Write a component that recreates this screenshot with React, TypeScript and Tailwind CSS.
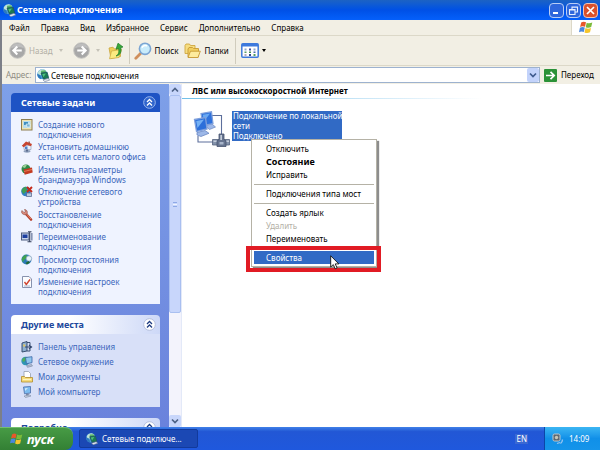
import type { ReactNode } from "react";

type IconProps = { className?: string };

const menuItems = ["Файл", "Правка", "Вид", "Избранное", "Сервис", "Дополнительно", "Справка"];

// Иконка сетевых подключений: глобус и монитор
function NetIcon({ className = "size-3" }: IconProps) {
  return (
    <svg viewBox="0 0 16 16" className={`shrink-0 ${className}`} aria-hidden="true">
      <circle cx="6.500" cy="6.500" r="6.200" fill="#4d9fd6" />
      <path d="M1 4Q3 .5 7 .4 9.500.6 11 2.300L7.500 4 5.500 7 2 8z" fill="#bfe3d8" />
      <path d="M.4 6l3 1 2 4-1 1.500Q.2 10.500.4 6z" fill="#2c79bd" />
      <path d="M5 2l5-.5 2.500 4L8 8 5 6z" fill="#58b267" />
      <path d="M5 5l7.500-1 2 7.500-6.500 1z" fill="#1c7a52" stroke="#1b4f63" strokeWidth=".9" />
      <path d="M6.500 6l4.500-.6-3 4.600z" fill="#4fc07d" />
      <path d="M7.500 13.500l6-2 2.200 2-6 2.300z" fill="#dfe5ee" stroke="#6b7a93" strokeWidth=".7" />
    </svg>
  );
}

function WizardIcon() {
  return (
    <svg viewBox="0 0 12 12" className="size-3 shrink-0" aria-hidden="true">
      <rect x=".5" y=".5" width="10.500" height="10.500" fill="#efe3b0" stroke="#8d7f52" />
      <rect x="2" y="2" width="7.500" height="7" fill="#b8dcec" />
      <path d="M3 3h4v3H3z" fill="#3f8fc0" />
      <path d="M5 5h4v3H6z" fill="#79b7d8" stroke="#fff" strokeWidth=".5" />
    </svg>
  );
}

function HomeNetIcon() {
  return (
    <svg viewBox="0 0 12 12" className="size-3 shrink-0" aria-hidden="true">
      <path d="M3 4.500h7v4H3z" fill="#eef2f8" stroke="#8b96b0" strokeWidth=".6" />
      <path d="M.8 4.800L5 .5l6 2.500-1 2.300-4-1.500-3.300 2.500z" fill="#c8452f" />
      <path d="M7.500.5h1.300v2H7.500z" fill="#8c4a3c" />
      <rect x="4" y="5.500" width="2.500" height="2.500" fill="#4e7fc9" />
      <ellipse cx="6" cy="10.300" rx="3.500" ry="1.400" fill="#8fa0bd" />
      <path d="M5 8.500h2v2H5z" fill="#5c6d90" />
    </svg>
  );
}

function FirewallIcon() {
  return (
    <svg viewBox="0 0 12 12" className="size-3 shrink-0" aria-hidden="true">
      <circle cx="5" cy="5" r="4.500" fill="#2f8a4a" />
      <path d="M1 3Q3 .5 6 .8L4 4z" fill="#9fd19a" />
      <path d="M2.500 5.500l8.500-2 .7 5-8 2.300z" fill="#c23a22" />
      <path d="M3 7.500l8-2" stroke="#ef9a70" strokeWidth=".7" fill="none" />
    </svg>
  );
}

function DisconnectIcon() {
  return (
    <svg viewBox="0 0 12 12" className="size-3 shrink-0" aria-hidden="true">
      <circle cx="5" cy="5.500" r="4.800" fill="#2f7fc4" />
      <path d="M.5 5Q1.500 1 5 .8l1 4.200L2.500 8z" fill="#3f9f55" />
      <path d="M5.500 7h5v3.500h-5z" fill="#b9c7dd" stroke="#4f618a" strokeWidth=".7" />
      <path d="M6 1l5 5M11 1L6 6" stroke="#c52a1a" strokeWidth="1.900" />
    </svg>
  );
}

function WrenchIcon() {
  return (
    <svg viewBox="0 0 12 12" className="size-3 shrink-0" aria-hidden="true">
      <path d="M5 5l5 5.500" stroke="#b5402c" strokeWidth="2.600" strokeLinecap="round" />
      <path d="M5.500 5l4.500 5" stroke="#e98b6e" strokeWidth=".9" />
      <path d="M1 1.500l2 2 1.500-1L3.500.5C6 .5 7 3 6 5 4 6.500 1 5.500.5 3z" fill="#d9887a" stroke="#8a5048" strokeWidth=".6" />
    </svg>
  );
}

function RenameIcon() {
  return (
    <svg viewBox="0 0 12 12" className="size-3 shrink-0" aria-hidden="true">
      <rect x=".5" y="2" width="7.500" height="7" fill="#c7d3ea" stroke="#4d5d80" />
      <rect x="1.500" y="3.500" width="5" height="3.500" fill="#1d3fa0" />
      <path d="M7 .8h3.500M8.700.8v10M6.500 10.800h4" stroke="#35415e" strokeWidth="1.100" fill="none" />
      <path d="M10.700 2v7.500" stroke="#8593b3" strokeWidth="1.800" />
    </svg>
  );
}

function StatusIcon() {
  return (
    <svg viewBox="0 0 12 12" className="size-3 shrink-0" aria-hidden="true">
      <circle cx="5.500" cy="5.500" r="5" fill="#2c7ab8" />
      <path d="M1 4Q2.500 1 5.500.8L6 4 3 6 2 8.500Q0 6 1 4z" fill="#3fa250" />
      <circle cx="8" cy="4.500" r="2.700" fill="#e7f4fb" stroke="#8fa7c2" strokeWidth=".8" />
      <path d="M4.500 9l3-2 1.500 1.500-3 2z" fill="#236a33" />
    </svg>
  );
}

function SettingsIcon() {
  return (
    <svg viewBox="0 0 12 12" className="size-3 shrink-0" aria-hidden="true">
      <path d="M1.500.5h6.500l2.500 2.500v8.500h-9z" fill="#fbfcff" stroke="#7a86a5" strokeWidth=".9" />
      <path d="M3.500 6l1.800 2.500L9 3.500" stroke="#d0452f" strokeWidth="1.400" fill="none" />
      <path d="M3 10h6" stroke="#a9b4cc" />
    </svg>
  );
}

function ControlPanelIcon() {
  return (
    <svg viewBox="0 0 12 12" className="size-3 shrink-0" aria-hidden="true">
      <path d="M1 2l5-1.500v9.500L1 11z" fill="#8fb0cf" stroke="#2e4466" strokeWidth=".9" />
      <path d="M6 1.500h3v2.500M6 10h3V8" stroke="#2e4466" strokeWidth=".9" fill="none" />
      <path d="M4 6h6M8 4l2.500 2L8 8" stroke="#30456c" strokeWidth="1.200" fill="none" />
      <rect x="2.200" y="3.500" width="2" height="2" fill="#e8c65a" />
    </svg>
  );
}

function NetPlacesIcon() {
  return (
    <svg viewBox="0 0 12 12" className="size-3 shrink-0" aria-hidden="true">
      <circle cx="4.500" cy="5" r="4.200" fill="#2f95b5" />
      <path d="M1 3.500Q3 .5 6 1L4 5 2 6z" fill="#4fae5a" />
      <path d="M4.500 1.500l6.500-.8v6l-5.500 1z" fill="#8fc6ee" stroke="#3866a5" strokeWidth=".8" />
      <path d="M5.500 9.500l5-1 1 1.500-5 1.300z" fill="#b6c2d6" stroke="#62718e" strokeWidth=".5" />
    </svg>
  );
}

function DocumentsIcon() {
  return (
    <svg viewBox="0 0 12 12" className="size-3 shrink-0" aria-hidden="true">
      <path d="M3 .5h4.500l2 2V7H3z" fill="#fff" stroke="#8a93a5" strokeWidth=".7" />
      <path d="M.5 5.500h3l1 1h7v4.500H.5z" fill="#f6dc7c" stroke="#b28d2c" strokeWidth=".8" />
      <path d="M2 8.500h8" stroke="#fff3bd" />
    </svg>
  );
}

function ComputerIcon() {
  return (
    <svg viewBox="0 0 12 12" className="size-3 shrink-0" aria-hidden="true">
      <path d="M2.500 1l7-.5v6.500l-6 .8z" fill="#7dbcf0" stroke="#4a6da8" strokeWidth=".8" />
      <path d="M4 2.200l3-.3-3 3z" fill="#d4ecfc" />
      <path d="M5 8l2.500-.4.500 1.900H5z" fill="#7b89a5" />
      <path d="M3 10l5.500-1 1.500 1-5.500 1.500z" fill="#c7d0e0" stroke="#6a7893" strokeWidth=".5" />
    </svg>
  );
}

function RoundArrow({ left = false }: { left?: boolean }) {
  return (
    <svg viewBox="0 0 18 18" className="size-[17px] shrink-0" aria-hidden="true">
      <circle cx="9" cy="9" r="8.300" fill="#a8a8a8" stroke="#c9c8c4" />
      <path d="M2 6.500a7.500 7.500 0 0 1 14 0Q9 4 2 6.500z" fill="#bdbdbd" />
      <path
        d={left ? "M13.500 9H5M8.800 4.800L4.600 9l4.200 4.200" : "M4.500 9H13M9.200 4.800L13.400 9l-4.200 4.200"}
        stroke="#fff"
        strokeWidth="2.200"
        fill="none"
      />
    </svg>
  );
}

function UpFolderIcon() {
  return (
    <svg viewBox="0 0 16 18" className="h-[18px] w-4 shrink-0" aria-hidden="true">
      <path d="M1 6l4-.8 1.500 1.800 5.500-.5.5 8L3 16.500z" fill="#f0cf58" stroke="#c9a43a" strokeWidth=".8" />
      <path d="M1.500 16.800l2-7.800 10-1.500-2.500 8z" fill="#fbeb80" stroke="#cfae48" strokeWidth=".8" />
      <path d="M8 14c3-1.500 3.200-4.500 2.500-7.500l-2.500.8L10 1.200l5 3.800-2.200.6c.8 4.400-.3 7.700-4.800 8.400z" fill="#38a838" stroke="#1d7a25" strokeWidth=".7" />
    </svg>
  );
}

function SearchIcon() {
  return (
    <svg viewBox="0 0 18 18" className="size-[18px] shrink-0" aria-hidden="true">
      <path d="M7 11L1.800 16.200" stroke="#cf8f5c" strokeWidth="2.800" strokeLinecap="round" />
      <circle cx="11" cy="6.800" r="5.600" fill="#c9ecfb" stroke="#7ba5d3" strokeWidth="1.600" />
      <path d="M8 5.800a3.500 3.500 0 0 1 5-1.800" stroke="#fff" strokeWidth="1.500" fill="none" />
    </svg>
  );
}

function FoldersIcon() {
  return (
    <svg viewBox="0 0 17 16" className="h-4 w-[17px] shrink-0" aria-hidden="true">
      <path d="M1 2.500l1-1.500h3.500l1 1.500H11v8H1z" fill="#f6dd80" stroke="#cfa741" strokeWidth=".9" />
      <path d="M4 6l1-1.500h3.500l1 1h5V14H4z" fill="#f2cf60" stroke="#c79a34" strokeWidth=".9" />
      <path d="M4 14.500l2.500-6.300H16.300L14 14.500z" fill="#fdeb9d" stroke="#c79a34" strokeWidth=".9" />
    </svg>
  );
}

function ViewsIcon() {
  return (
    <svg viewBox="0 0 18 15" className="h-[15px] w-[18px] shrink-0" aria-hidden="true">
      <rect x=".8" y=".8" width="16.400" height="13.400" rx="1" fill="#fff" stroke="#3d79dc" strokeWidth="1.500" />
      <path d="M1 1h16v2.500H1z" fill="#3d79dc" />
      <path d="M3.500 5.500h2v2h-2zM12.500 5.500h2v2h-2z" fill="#8fa6cf" />
      <path d="M8 5.500h2v2H8z" fill="#3f4fa0" />
      <path d="M3.500 8.500h2v1.500h-2z" fill="#5c9c68" />
      <path d="M8 8.500h2v1.500H8z" fill="#44904d" />
      <path d="M12.500 8.500h2v1.500h-2z" fill="#4a67ad" />
      <path d="M3.500 11h2v2h-2z" fill="#b3abb8" />
      <path d="M8 11h2v2H8z" fill="#314a90" />
      <path d="M12.500 11h2v2h-2z" fill="#56a05b" />
    </svg>
  );
}

function WindowsFlag({ className = "" }: IconProps) {
  return (
    <svg viewBox="0 0 14 13" className={`shrink-0 ${className}`} aria-hidden="true">
      <path d="M2.200 1.600Q4.500-.1 7 1.300L6 5.800Q3.500 4.500 1.100 6z" fill="#e8572a" />
      <path d="M7.700 1.700Q10 3 13.300 1.500L12.200 6Q9.500 7.500 6.700 6.200z" fill="#7bbb3a" />
      <path d="M.9 6.800Q3.500 5.300 5.800 6.600L4.800 11Q2.500 9.800 0 11.200z" fill="#4a87dd" />
      <path d="M6.500 7Q9 8.300 12 6.900L11 11.300Q8.300 12.800 5.500 11.500z" fill="#f5c52c" />
    </svg>
  );
}

// Два монитора и сетевой кабель с тройником
function LanIcon() {
  return (
    <svg viewBox="0 0 38 38" className="size-[38px] shrink-0" aria-hidden="true">
      <path d="M19 4.500h9.500V24M5 25v6h15" stroke="#5d6f9c" strokeWidth="1.100" fill="none" />
      <path d="M12 14.500l7-1.500 3.500 3-6 2.500z" fill="#9db8e8" stroke="#6a86c0" strokeWidth=".7" />
      <path d="M8 2.500L18.500.8 20 12.500 10 14.500z" fill="#2f72dc" stroke="#7fa0dc" strokeWidth="1.200" />
      <path d="M9.800 3.800l7.200-1.200-6 8z" fill="#6aa9f2" />
      <path d="M4 21.500l8-2 4 2.800-8 3.200-4-1.500z" fill="#9db8e8" stroke="#5f7cba" strokeWidth=".7" />
      <path d="M1.500 8.500l11-2 1.500 11.500-10.500 2.500z" fill="#2c6fda" stroke="#7fa0dc" strokeWidth="1.300" />
      <path d="M3.200 10l7.800-1.400L4.500 17z" fill="#74b0f4" />
      <path d="M19.500 28.500h17V34h-17z" fill="#8493ab" stroke="#55637e" strokeWidth=".8" />
      <path d="M26 23h5v5.500l2 1.500v5.500h-9V30l2-1.500z" fill="#66748f" stroke="#46536f" strokeWidth=".8" />
      <path d="M27.300 24h1.700v5h-1.700zM20.500 29.500h3V31h-3zM33.500 29.500H36V31h-2.500z" fill="#c3ccda" />
      <path d="M26.500 31h4v2.500h-4z" fill="#a9b6cb" />
    </svg>
  );
}

function Chevron({ down = false }: { down?: boolean }) {
  return (
    <svg viewBox="0 0 8 8" className="size-2" aria-hidden="true">
      <path d={down ? "M1 2.500l3 3 3-3" : "M1 5.500l3-3 3 3"} stroke="currentColor" strokeWidth="1.700" fill="none" />
    </svg>
  );
}

function CollapseButton({ primary = false }: { primary?: boolean }) {
  return (
    <button type="button" aria-label="Свернуть" className="shrink-0">
      <svg viewBox="0 0 13 13" className="size-[13px]" aria-hidden="true">
        <circle cx="6.500" cy="6.500" r="5.800" fill={primary ? "#2f64cc" : "#fff"} stroke={primary ? "#9ab8ee" : "#b5bfdc"} />
        <path
          d="M4 6l2.500-2.500L9 6M4 9.500L6.500 7 9 9.500"
          stroke={primary ? "#fff" : "#1f3d82"}
          strokeWidth="1.300"
          fill="none"
        />
      </svg>
    </button>
  );
}

function TaskLink({ icon, children }: { icon: ReactNode; children: ReactNode }) {
  return (
    <li>
      <a href="#" className="flex items-start gap-[5px]">
        {icon}
        <span className="pt-px leading-[10px]">{children}</span>
      </a>
    </li>
  );
}

function PanelHeader({ title, primary = false }: { title: string; primary?: boolean }) {
  return (
    <div
      className={
        primary
          ? "flex h-[19px] items-center justify-between rounded-t-sm bg-[#1e53c4] pr-1 pl-[10px] text-white"
          : "flex h-[19px] items-center justify-between rounded-t-sm bg-linear-to-r from-white from-40% to-[#cdd8f7] pr-1 pl-[10px] text-[#21489c]"
      }
    >
      <h2 className="text-[9px] font-bold">{title}</h2>
      <CollapseButton primary={primary} />
    </div>
  );
}

function MenuRow({ children, className = "" }: { children: ReactNode; className?: string }) {
  return (
    <button type="button" role="menuitem" className={`flex h-[13px] w-full items-center pl-3 ${className}`}>
      {children}
    </button>
  );
}

function MenuLine() {
  return (
    <div className="flex h-[6px] items-center">
      <div className="h-px w-full bg-[#b5b2a6]" />
    </div>
  );
}

function TitleBar() {
  return (
    <header className="flex h-5 shrink-0 items-center bg-linear-to-b from-[#1c62c4] via-[#0050e6] to-[#0560fb] pr-[2px] pl-[3px]">
      <NetIcon className="size-[13px]" />
      <h1 className="ml-px flex-1 text-[9px] font-bold text-white">Сетевые подключения</h1>
      <div className="flex gap-[2px]">
        <button type="button" aria-label="Свернуть окно" className="flex size-[15px] items-end rounded-sm border border-[#b9cdf5] bg-[#2e66dc] p-[3px]">
          <span className="h-[2px] w-[5px] bg-white" />
        </button>
        <button type="button" aria-label="Восстановить" className="size-[15px] rounded-sm border border-[#b9cdf5] bg-[#2e66dc]">
          <svg viewBox="0 0 13 13" aria-hidden="true">
            <path d="M5 5V3h5.500v5H8.500M2.500 5.500H8V10.500H2.500zM2.500 6H8M5 3.300h5.500" stroke="#e6eeff" strokeWidth="1.100" fill="none" />
          </svg>
        </button>
        <button type="button" aria-label="Закрыть" className="size-[15px] rounded-sm border border-[#edc4b8] bg-[#d9512c]">
          <svg viewBox="0 0 13 13" aria-hidden="true">
            <path d="M3 3l7 7M10 3l-7 7" stroke="#fff" strokeWidth="1.700" />
          </svg>
        </button>
      </div>
    </header>
  );
}

function Toolbar() {
  return (
    <div className="flex h-[30px] shrink-0 items-center border-b border-[#dcd8c8] pl-[7px]">
      <button type="button" disabled className="flex items-center gap-[3px] text-[#b3b0a6]">
        <RoundArrow left />
        Назад
      </button>
      <span className="ml-[6px] border-x-2 border-t-[3px] border-x-transparent border-t-[#c5c2b8]" />
      <button type="button" disabled aria-label="Вперед" className="ml-[10px]">
        <RoundArrow />
      </button>
      <span className="ml-[6px] border-x-2 border-t-[3px] border-x-transparent border-t-[#c5c2b8]" />
      <button type="button" aria-label="Вверх" className="ml-2">
        <UpFolderIcon />
      </button>
      <span className="ml-[5px] h-[26px] w-px bg-[#d0ccbd]" />
      <button type="button" className="ml-1 flex items-center gap-[3px]">
        <SearchIcon />
        Поиск
      </button>
      <button type="button" className="ml-[6px] flex items-center gap-[3px]">
        <FoldersIcon />
        Папки
      </button>
      <span className="ml-[6px] h-[26px] w-px bg-[#d0ccbd]" />
      <button type="button" aria-label="Вид значков" className="ml-[5px] flex items-center gap-[3px]">
        <ViewsIcon />
        <span className="border-x-2 border-t-[3px] border-x-transparent border-t-black" />
      </button>
    </div>
  );
}

function AddressBar() {
  return (
    <div className="flex h-[18px] shrink-0 items-center pl-1">
      <label htmlFor="address" className="w-[29px] text-[#8f8c82]">
        Адрес:
      </label>
      <div className="flex h-4 flex-1 items-center border border-[#9db2cf] bg-white pl-px">
        <NetIcon className="size-[13px]" />
        <input id="address" defaultValue="Сетевые подключения" className="h-full min-w-0 flex-1 pl-px outline-none" />
        <button type="button" aria-label="Список адресов" className="flex h-[14px] w-3 items-center justify-center rounded-xs bg-[#c3d3fb] text-[#3f5b8f]">
          <Chevron down />
        </button>
      </div>
      <button type="button" className="ml-1 flex w-14 items-center gap-1">
        <svg viewBox="0 0 13 13" className="size-[13px] shrink-0" aria-hidden="true">
          <rect width="13" height="13" rx="1" fill="#2b9238" />
          <path d="M2 6.500h8M6.500 2.800l3.700 3.700-3.700 3.700" stroke="#fff" strokeWidth="1.700" fill="none" />
        </svg>
        Переход
      </button>
    </div>
  );
}

function Sidebar() {
  return (
    <aside className="flex w-[167px] shrink-0 flex-col gap-[11px] overflow-hidden bg-linear-to-b from-[#7ea0e8] to-[#6a82dc] pt-[9px] pr-[9px] pl-[9px] text-[#3b66bb]">
      <section className="shrink-0">
        <PanelHeader title="Сетевые задачи" primary />
        <ul className="flex h-[192px] flex-col justify-between bg-[#eff3ff] pt-[7px] pb-[7px] pl-[10px]">
          <TaskLink icon={<WizardIcon />}>Создание нового<br />подключения</TaskLink>
          <TaskLink icon={<HomeNetIcon />}>Установить домашнюю<br />сеть или сеть малого офиса</TaskLink>
          <TaskLink icon={<FirewallIcon />}>Изменить параметры<br />брандмауэра Windows</TaskLink>
          <TaskLink icon={<DisconnectIcon />}>Отключение сетевого<br />устройства</TaskLink>
          <TaskLink icon={<WrenchIcon />}>Восстановление<br />подключения</TaskLink>
          <TaskLink icon={<RenameIcon />}>Переименование<br />подключения</TaskLink>
          <TaskLink icon={<StatusIcon />}>Просмотр состояния<br />подключения</TaskLink>
          <TaskLink icon={<SettingsIcon />}>Изменение настроек<br />подключения</TaskLink>
        </ul>
      </section>
      <section className="shrink-0">
        <PanelHeader title="Другие места" />
        <ul className="flex flex-col gap-[3px] bg-[#d8e0f8] pt-[7px] pb-[9px] pl-[10px]">
          <TaskLink icon={<ControlPanelIcon />}>Панель управления</TaskLink>
          <TaskLink icon={<NetPlacesIcon />}>Сетевое окружение</TaskLink>
          <TaskLink icon={<DocumentsIcon />}>Мои документы</TaskLink>
          <TaskLink icon={<ComputerIcon />}>Мой компьютер</TaskLink>
        </ul>
      </section>
      <section className="shrink-0">
        <PanelHeader title="Подробно" />
      </section>
    </aside>
  );
}

function Scrollbar() {
  return (
    <div className="flex w-[13px] shrink-0 flex-col border-r border-[#e3e9f8] bg-[#f3f3fc]">
      <button type="button" aria-label="Прокрутить вверх" className="flex h-[11px] items-center justify-center rounded-xs bg-[#c8d6fb] text-[#4d6185]">
        <Chevron />
      </button>
      <div className="flex grow-[216] basis-0 flex-col items-center justify-center gap-px rounded-xs border border-[#a9bff0] bg-[#c8d6fb]">
        <span className="h-px w-1 bg-[#8ea9e6]" />
        <span className="h-px w-1 bg-[#eef3ff]" />
        <span className="h-px w-1 bg-[#8ea9e6]" />
      </div>
      <div className="grow-[102] basis-0" />
      <button type="button" aria-label="Прокрутить вниз" className="flex h-3 items-center justify-center rounded-xs bg-[#c8d6fb] text-[#4d6185]">
        <Chevron down />
      </button>
    </div>
  );
}

// Контекстное меню подключения, открыто поверх списка
function ContextMenu() {
  return (
    <div role="menu" className="absolute top-[55px] left-[69px] w-[126px] border border-[#b5b2a6] bg-white p-[2px] shadow-[2px_2px_1px_#8d8d8d]">
      <MenuRow>Отключить</MenuRow>
      <MenuRow className="text-[9px] font-bold">Состояние</MenuRow>
      <MenuRow>Исправить</MenuRow>
      <MenuLine />
      <MenuRow>Подключения типа мост</MenuRow>
      <MenuLine />
      <MenuRow>Создать ярлык</MenuRow>
      <MenuRow className="text-[#b3b0a6]">Удалить</MenuRow>
      <MenuRow>Переименовать</MenuRow>
      <MenuLine />
      <MenuRow className="bg-[#316ac5] text-white">Свойства</MenuRow>
      <div className="pointer-events-none absolute -right-[5px] -bottom-[6px] h-[26px] w-[135px] border-4 border-[#e11b24]" />
      <svg viewBox="0 0 10 15" className="absolute right-[36px] -bottom-1 h-[15px] w-[10px]" aria-hidden="true">
        <path d="M.7.8v11.200l2.600-2.400 1.900 4.200 1.900-.9-1.900-4h3.600z" fill="#fff" stroke="#111" strokeWidth=".9" />
      </svg>
    </div>
  );
}

function Connections() {
  return (
    <main className="relative min-w-0 flex-1 bg-white">
      <h2 className="flex h-[14px] items-center pl-[10px] font-bold">ЛВС или высокоскоростной Интернет</h2>
      <div className="h-px w-[300px] bg-linear-to-r from-[#70bfe8] to-white" />
      <div className="flex gap-px pt-3 pl-[11px]">
        <LanIcon />
        <a href="#" className="h-[30px] w-[110px] bg-[#316ac5] pl-px leading-[10px] whitespace-nowrap text-white">
          Подключение по локальной<br />сети<br />Подключено
        </a>
      </div>
      <ContextMenu />
    </main>
  );
}

function Taskbar() {
  return (
    <footer className="flex h-[23px] shrink-0 items-center bg-linear-to-b from-[#4080e8] from-0% via-[#2257d5] via-20% to-[#1f58dd] text-white">
      <button type="button" className="flex h-full w-[73px] items-center gap-1 rounded-r-lg border-t border-[#73bd70] bg-linear-to-b from-[#479b45] to-[#338034] pl-[10px] text-[13px] font-bold italic">
        <WindowsFlag className="h-3 w-[13px]" />
        пуск
      </button>
      <button type="button" className="ml-[6px] flex h-[19px] w-[119px] items-center gap-1 rounded-xs border border-[#123a9c] bg-[#1b48b4] pl-[6px]">
        <NetIcon className="size-3" />
        Сетевые подключе...
      </button>
      <span className="mr-4 ml-auto bg-[#3a68d3] px-px">EN</span>
      <div className="flex h-full w-[56px] items-center gap-[5px] border-l border-[#0b46a8] bg-linear-to-b from-[#3bb6f3] via-[#1090e8] to-[#1594ea] pl-[7px]">
        <svg viewBox="0 0 12 12" className="size-3" aria-hidden="true">
          <rect x="1" y="1" width="7" height="7" rx="1.500" fill="#5d6872" stroke="#c2c7c9" />
          <circle cx="4.500" cy="4.500" r="1.700" fill="#c9c7b8" />
          <path d="M5 10.500l3-1M8.500 10.500q2-1.500 2-4" stroke="#9bc5f0" strokeWidth="1.300" fill="none" />
        </svg>
        <time>14:09</time>
      </div>
    </footer>
  );
}

export default function App() {
  return (
    <div className="flex h-screen flex-col overflow-hidden bg-[#f2efe4] font-['Noto_Sans',sans-serif] text-[8px] leading-[10px] text-black">
      <TitleBar />
      <div className="flex min-h-0 flex-1 flex-col border-l-2 border-[#7c7f88]">
        <div className="flex h-4 shrink-0 items-stretch border-b border-[#dcd8c8]">
          <nav className="flex flex-1 items-center gap-[11px] pl-[7px]">
            {menuItems.map((item) => (
              <button key={item} type="button">
                {item}
              </button>
            ))}
          </nav>
          <div className="flex w-[29px] items-center justify-center border-l border-[#dcd8c8] bg-white">
            <WindowsFlag className="h-[13px] w-[14px]" />
          </div>
        </div>
        <Toolbar />
        <AddressBar />
        <div className="flex min-h-0 flex-1">
          <Sidebar />
          <Scrollbar />
          <Connections />
        </div>
      </div>
      <Taskbar />
    </div>
  );
}
